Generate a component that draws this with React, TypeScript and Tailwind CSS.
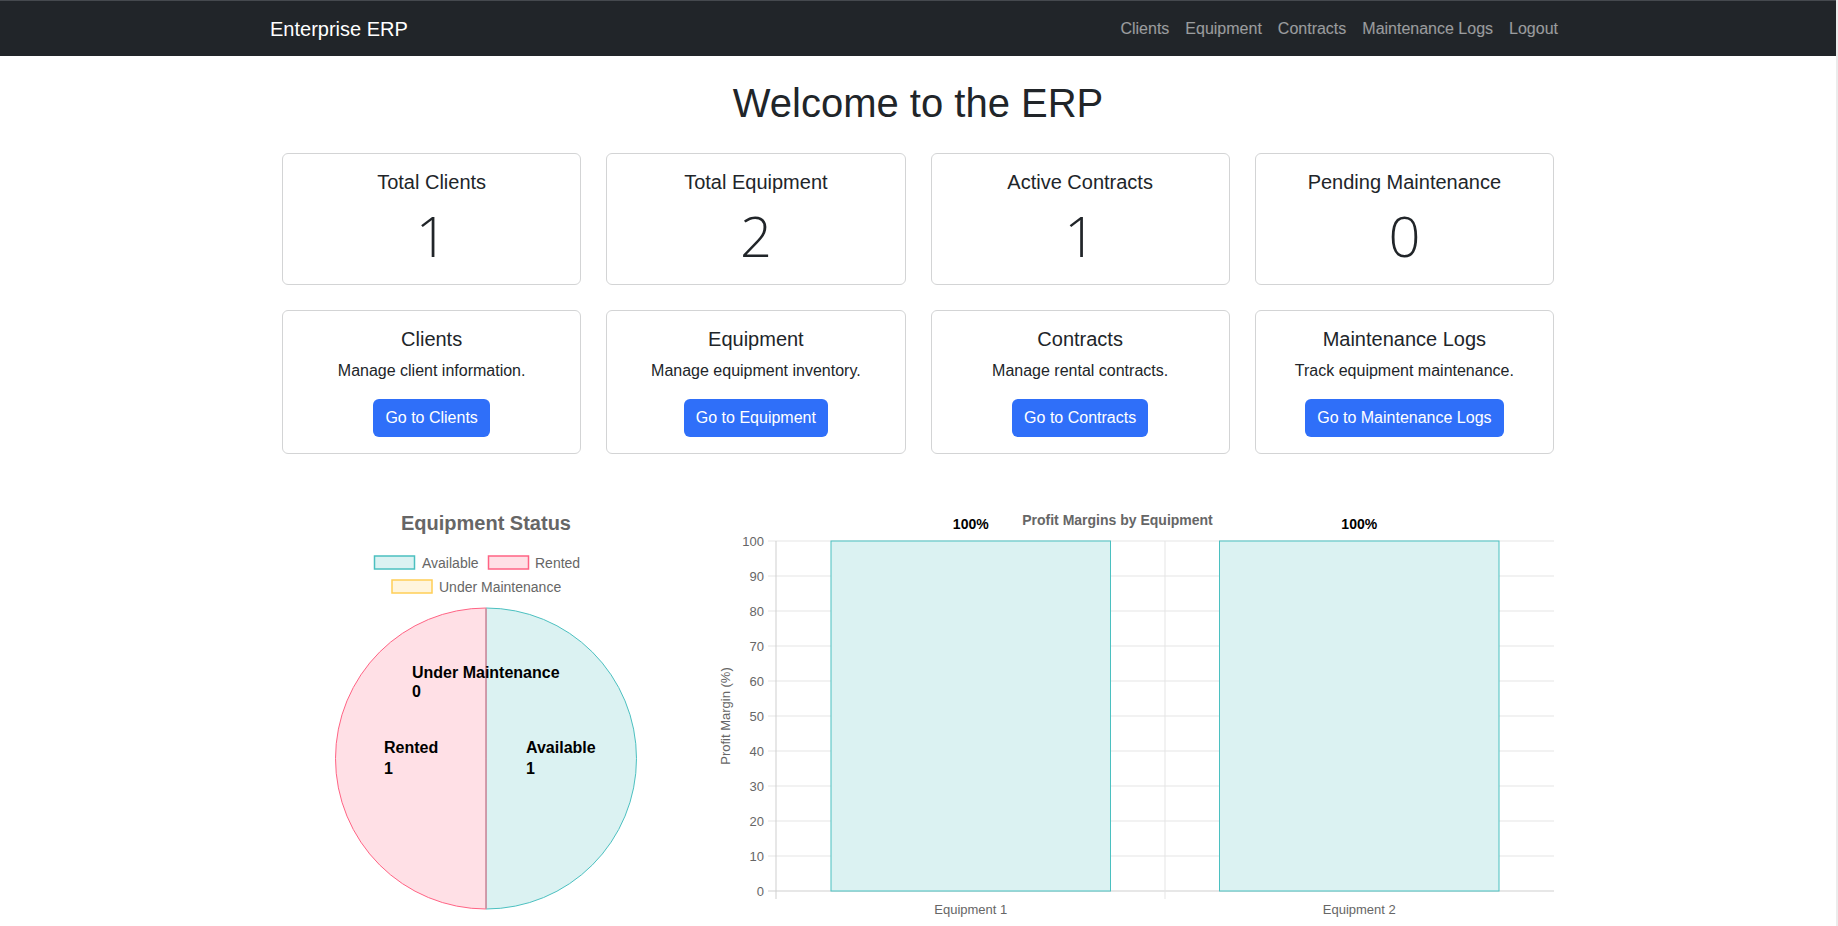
import React from "react";

const stats = [
  { label: "Total Clients", value: 1 },
  { label: "Total Equipment", value: 2 },
  { label: "Active Contracts", value: 1 },
  { label: "Pending Maintenance", value: 0 },
];

const modules = [
  { title: "Clients", text: "Manage client information.", btn: "Go to Clients" },
  { title: "Equipment", text: "Manage equipment inventory.", btn: "Go to Equipment" },
  { title: "Contracts", text: "Manage rental contracts.", btn: "Go to Contracts" },
  { title: "Maintenance Logs", text: "Track equipment maintenance.", btn: "Go to Maintenance Logs" },
];

const navLinks = ["Clients", "Equipment", "Contracts", "Maintenance Logs", "Logout"];

function PieChart() {
  const cx = 204;
  const cy = 258.5;
  const r = 150.5;
  return (
    <svg width="408" height="430" className="font-['Liberation_Sans',Arial,sans-serif]">
      <text x={204} y={23} textAnchor="middle" dominantBaseline="central" fontSize="20" fontWeight="bold" fill="#666">
        Equipment Status
      </text>
      {/* legend */}
      <rect x={92.5} y={56} width={40} height={13} fill="#dbf2f2" stroke="rgb(75,192,192)" strokeWidth="1.5" />
      <text x={140} y={62.5} dominantBaseline="central" fontSize="14" fill="#666">Available</text>
      <rect x={206.5} y={56} width={40} height={13} fill="#ffe0e6" stroke="rgb(255,99,132)" strokeWidth="1.5" />
      <text x={253} y={62.5} dominantBaseline="central" fontSize="14" fill="#666">Rented</text>
      <rect x={110} y={80} width={40} height={13} fill="#fff5dd" stroke="rgb(255,206,86)" strokeWidth="1.5" />
      <text x={157} y={86.5} dominantBaseline="central" fontSize="14" fill="#666">Under Maintenance</text>
      {/* pie */}
      <path d={`M ${cx} ${cy} L ${cx} ${cy - r} A ${r} ${r} 0 0 1 ${cx} ${cy + r} Z`} fill="#dbf2f2" stroke="rgb(75,192,192)" strokeWidth="1" />
      <path d={`M ${cx} ${cy} L ${cx} ${cy + r} A ${r} ${r} 0 0 1 ${cx} ${cy - r} Z`} fill="#ffe0e6" stroke="rgb(255,99,132)" strokeWidth="1" />
      <line x1={cx} y1={cy - r} x2={cx} y2={cy + r} stroke="#c99aa7" strokeWidth="1.5" />
      <g fontSize="16" fontWeight="bold" fill="#000" dominantBaseline="central">
        <text x={130} y={172}>Under Maintenance</text>
        <text x={130} y={191.5}>0</text>
        <text x={102} y={247}>Rented</text>
        <text x={102} y={268}>1</text>
        <text x={244} y={247}>Available</text>
        <text x={244} y={268}>1</text>
      </g>
    </svg>
  );
}

function BarChart() {
  const x0 = 62;
  const x1 = 840;
  const yZero = 391;
  const ticks = [0, 10, 20, 30, 40, 50, 60, 70, 80, 90, 100];
  const bars = [
    { label: "Equipment 1", from: 117, to: 396.5 },
    { label: "Equipment 2", from: 505.5, to: 785 },
  ];
  return (
    <svg width="840" height="430" className="font-['Liberation_Sans',Arial,sans-serif]">
      <text x={403.5} y={20} textAnchor="middle" dominantBaseline="central" fontSize="14" fontWeight="bold" fill="#666">
        Profit Margins by Equipment
      </text>
      {ticks.map((t) => {
        const y = yZero - t * 3.5;
        return (
          <g key={t}>
            <line x1={54} y1={y} x2={x1} y2={y} stroke={t === 0 ? "#cfcfcf" : "#e5e5e5"} strokeWidth="1" />
            <text x={50} y={y} textAnchor="end" dominantBaseline="central" fontSize="13" fill="#666">
              {t}
            </text>
          </g>
        );
      })}
      <line x1={x0} y1={41} x2={x0} y2={399} stroke="#cfcfcf" strokeWidth="1" />
      <line x1={451} y1={41} x2={451} y2={399} stroke="#e5e5e5" strokeWidth="1" />
      {bars.map((b) => (
        <g key={b.label}>
          <rect x={b.from} y={41} width={b.to - b.from} height={yZero - 41} fill="#dbf2f2" stroke="rgb(75,192,192)" strokeWidth="1" />
          <text x={(b.from + b.to) / 2} y={24} textAnchor="middle" dominantBaseline="central" fontSize="14" fontWeight="bold" fill="#000">
            100%
          </text>
          <text x={(b.from + b.to) / 2} y={409} textAnchor="middle" dominantBaseline="central" fontSize="13" fill="#666">
            {b.label}
          </text>
        </g>
      ))}
      <text
        x={11.5}
        y={216}
        textAnchor="middle"
        dominantBaseline="central"
        fontSize="13"
        fill="#666"
        transform="rotate(-90 11.5 216)"
      >
        Profit Margin (%)
      </text>
    </svg>
  );
}

export default function App() {
  return (
    <div className="min-h-screen bg-white pr-[2px] font-['Liberation_Sans',Arial,sans-serif] text-[#212529]">
      <nav className="h-14 border-t border-[#45494e] bg-[#212529]">
        <div className="mx-auto flex h-full w-[1296px] items-center justify-between">
          <span className="text-xl text-white">Enterprise ERP</span>
          <div className="flex">
            {navLinks.map((l) => (
              <a key={l} className="px-2 text-base text-white/55">
                {l}
              </a>
            ))}
          </div>
        </div>
      </nav>

      <div className="mx-auto w-[1272px]">
        <h1 className="mt-[23px] mb-[26px] text-center text-[40px] leading-[48px] font-medium">Welcome to the ERP</h1>

        <div className="grid grid-cols-4 gap-[25px]">
          {stats.map((s) => (
            <div key={s.label} className="rounded-md border border-[#d3d4d5] p-4 text-center">
              <h5 className="mb-2 text-xl leading-6 font-medium">{s.label}</h5>
              <p className="font-['Open_Sans',sans-serif] text-[56px] leading-[66px] font-light">{s.value}</p>
            </div>
          ))}
        </div>

        <div className="mt-[25px] grid grid-cols-4 gap-[25px]">
          {modules.map((m) => (
            <div key={m.title} className="flex flex-col items-center rounded-md border border-[#d3d4d5] p-4 text-center">
              <h5 className="mb-2 text-xl leading-6 font-medium">{m.title}</h5>
              <p className="mb-4 text-base leading-6">{m.text}</p>
              <button className="h-[38px] rounded-md bg-[#2f6ff9] px-3 text-base text-white">{m.btn}</button>
            </div>
          ))}
        </div>

        <div className="mt-[46px] flex gap-6">
          <div className="w-[408px] shrink-0">
            <PieChart />
          </div>
          <div className="w-[840px] shrink-0">
            <BarChart />
          </div>
        </div>
      </div>

      <div className="fixed top-0 right-0 h-screen w-[2px] bg-[#ececec]" />
    </div>
  );
}
